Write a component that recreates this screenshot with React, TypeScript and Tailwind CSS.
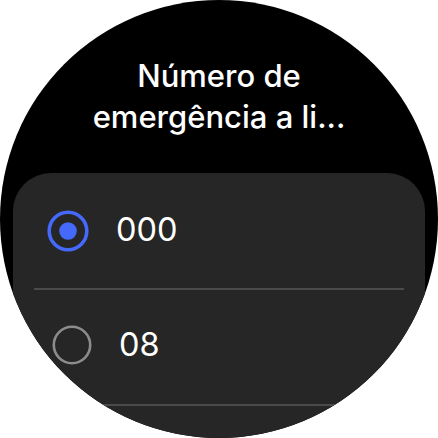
import React from "react";

function Radio({ checked }: { checked: boolean }) {
  return checked ? (
    <svg width="42" height="42" viewBox="0 0 42 42">
      <circle cx="21" cy="21" r="18.8" fill="none" stroke="#4469fb" strokeWidth="3.6" />
      <circle cx="21" cy="21" r="8.8" fill="#4469fb" />
    </svg>
  ) : (
    <svg width="40" height="40" viewBox="0 0 40 40">
      <circle cx="20" cy="20" r="18.2" fill="none" stroke="#8c8c8c" strokeWidth="2.6" />
    </svg>
  );
}

export default function App() {
  return (
    <div className="w-[438px] h-[438px] bg-white">
      <div
        className="w-[438px] h-[438px] rounded-full overflow-hidden bg-black flex flex-col"
        style={{ fontFamily: "Inter, Roboto, 'Noto Sans', sans-serif" }}
      >
        <div className="pt-[55px] text-center text-white font-medium text-[31px] leading-[41px]">
          <div>Número de</div>
          <div>emergência a li...</div>
        </div>
        <div className="mt-[36px] mx-[13px] rounded-[38px] bg-[#262626] flex flex-col shrink-0">
          <div className="h-[115px] flex items-center pl-[34px]">
            <Radio checked />
            <span className="ml-[27px] text-white text-[32.5px] leading-none">000</span>
          </div>
          <div className="mx-[21px] h-[2px] bg-[#4b4b4b]" />
          <div className="h-[114px] flex items-center pl-[39px] pb-[4px]">
            <Radio checked={false} />
            <span className="ml-[27px] text-white text-[32.5px] leading-none">08</span>
          </div>
          <div className="mx-[21px] h-[2px] bg-[#4b4b4b]" />
          <div className="h-[100px]" />
        </div>
      </div>
    </div>
  );
}
